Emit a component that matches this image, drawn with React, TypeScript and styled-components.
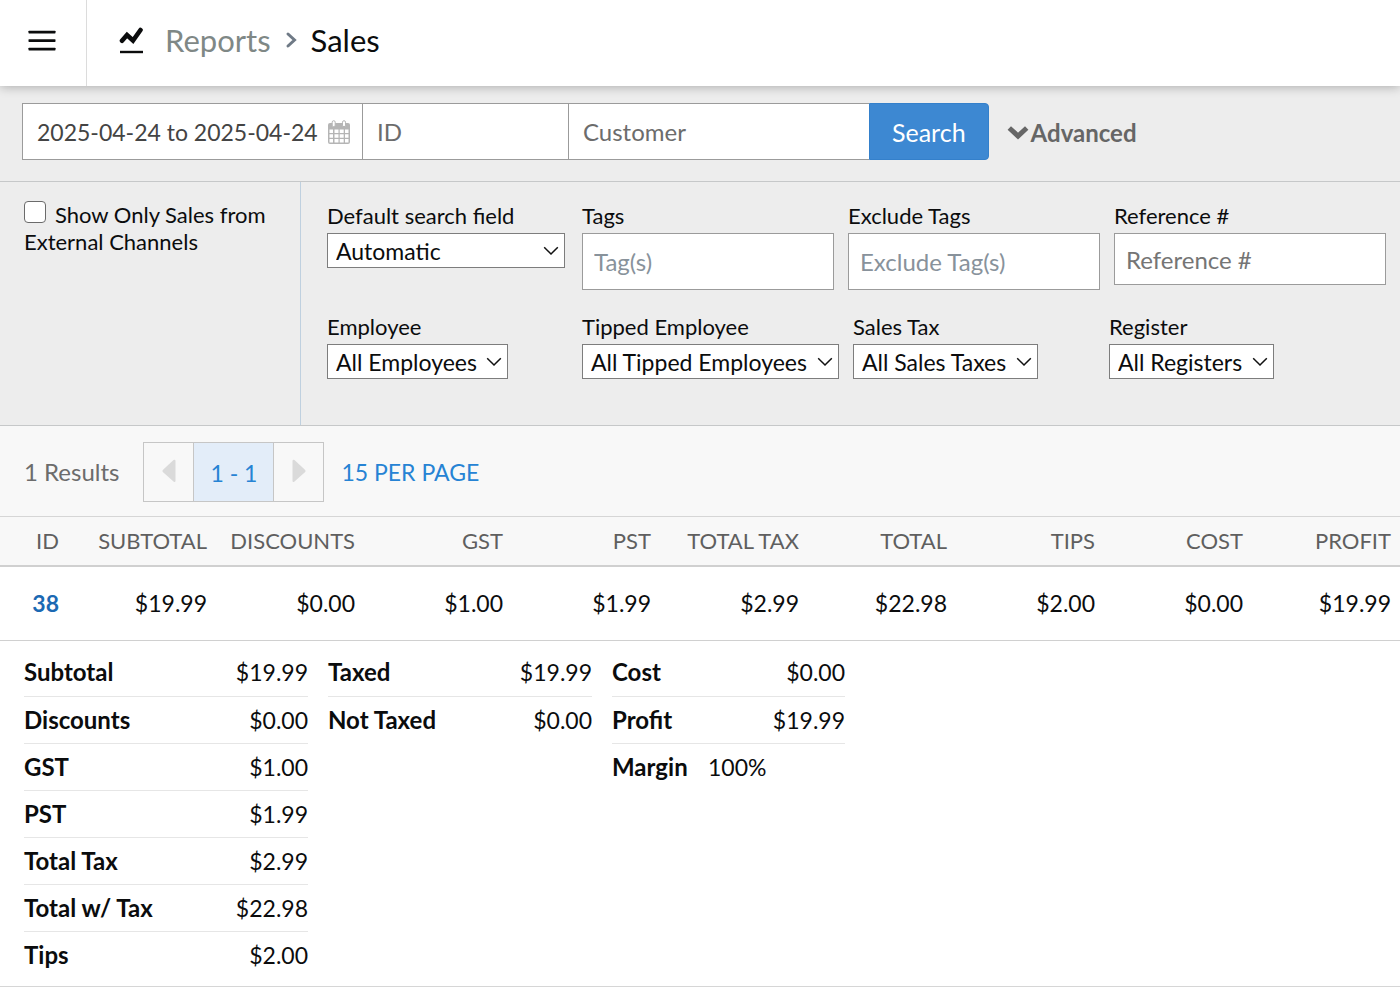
import React from "react";
import styled, { createGlobalStyle } from "styled-components";

const GlobalStyle = createGlobalStyle`
  *, *::before, *::after { box-sizing: border-box; }
  body {
    margin: 0;
    background: #fff;
    color: #0b0c0d;
    font-family: Lato, "Liberation Sans", sans-serif;
    font-size: 24px;
    line-height: 30px;
  }
  input, select, button { font: inherit; color: inherit; border-radius: 0; }
`;

const Header = styled.header`
  position: relative;
  display: flex;
  height: 86px;
  background: #fff;
  box-shadow: 0 1px 10px rgba(0, 0, 0, 0.28);
`;

const MenuButton = styled.button`
  display: flex;
  align-items: center;
  justify-content: center;
  width: 87px;
  padding: 0 3px 4px 0;
  border: 0;
  border-right: 1px solid #dcdcdc;
  background: none;
  cursor: pointer;
`;

const Breadcrumb = styled.nav`
  display: flex;
  align-items: center;
  padding: 0 32px 6px;
  font-size: 31px;
  line-height: 40px;
`;

const CrumbLink = styled.a`
  margin-left: 20px;
  color: #7f8886;
  text-decoration: none;
`;

const CrumbArrow = styled.svg`
  margin: 0 13px 0 14px;
`;

const SearchBar = styled.form`
  display: flex;
  align-items: center;
  padding: 17px 22px 21px;
  border-bottom: 1px solid #c6c8c9;
  background: #ededed;
`;

const SearchCell = styled.div<{ $width: number }>`
  display: flex;
  align-items: center;
  width: ${(p) => p.$width}px;
  height: 57px;
  border: 1px solid #9b9b9b;
  border-right-width: 0;
  background: #fff;
`;

const SearchInput = styled.input`
  flex: 1;
  min-width: 0;
  height: 100%;
  padding: 0 0 0 14px;
  border: 0;
  background: none;
  color: #444;
  &::placeholder { color: #6c6c6c; opacity: 1; }
`;

const DateInput = styled(SearchInput)`
  font-size: 23px;
`;

const CalendarIcon = styled.svg`
  flex: none;
  margin-right: 12px;
`;

const SearchButton = styled.button`
  height: 57px;
  padding: 0 22px;
  border: 1px solid #3480cb;
  border-radius: 0 4px 4px 0;
  background: #3d88d2;
  color: #fff;
  font-size: 25px;
  cursor: pointer;
`;

const AdvancedButton = styled.button`
  display: flex;
  align-items: center;
  gap: 2px;
  margin-left: 18px;
  padding: 2px 0 0;
  border: 0;
  background: none;
  color: #666;
  font-weight: 700;
  cursor: pointer;
`;

const Filters = styled.section`
  display: flex;
  min-height: 244px;
  border-bottom: 1px solid #c6c8c9;
  background: #ededed;
  font-size: 22px;
  line-height: 27px;
`;

const ChannelPane = styled.div`
  flex: none;
  width: 301px;
  padding: 19px 24px;
  border-right: 1px solid #bfd0df;
`;

const CheckBox = styled.input`
  appearance: none;
  width: 22px;
  height: 22px;
  margin: 0 9px 0 0;
  border: 1px solid #6b6b6b;
  border-radius: 4px;
  background: #fff;
`;

const FilterRows = styled.div`
  flex: 1;
  display: flex;
  flex-direction: column;
  padding: 20px 14px 0 26px;
`;

const FilterRow = styled.div`
  display: flex;
  min-height: 111px;
`;

const Field = styled.div<{ $width?: number }>`
  display: flex;
  flex-direction: column;
  align-items: flex-start;
  flex: ${(p) => (p.$width ? `0 0 ${p.$width}px` : "1")};
  min-width: 0;
`;

const FieldGap = styled.div<{ $narrow?: boolean }>`
  flex: none;
  width: ${(p) => (p.$narrow ? 14 : 17)}px;
`;

const FieldLabel = styled.label`
  margin-bottom: 4px;
`;

const TextField = styled.input<{ $tall?: boolean }>`
  width: 100%;
  height: ${(p) => (p.$tall ? 57 : 52)}px;
  padding: 0 11px;
  border: 1px solid #9b9b9b;
  background: #fff;
  font-size: 24px;
  &::placeholder {
    color: ${(p) => (p.$tall ? "#88929b" : "#757575")};
    opacity: 1;
  }
`;

const SelectBox = styled.div<{ $wide?: boolean }>`
  display: grid;
  align-items: center;
  width: ${(p) => (p.$wide ? "100%" : "auto")};
  & > * { grid-area: 1 / 1; }
  & > svg { justify-self: end; margin-right: 6px; pointer-events: none; }
`;

const Select = styled.select`
  appearance: none;
  width: 100%;
  height: 35px;
  padding: 0 30px 0 8px;
  border: 1px solid #7d7d7d;
  background: #fff;
  font-size: 23px;
  line-height: 30px;
`;

const ResultsBar = styled.div`
  display: flex;
  align-items: center;
  height: 90px;
  padding: 2px 24px 0;
  background: #f8f8f8;
  color: #6c6c6c;
`;

const Pager = styled.div`
  display: flex;
  height: 60px;
  margin: 0 17px 0 24px;
  border: 1px solid #c6c6c6;
`;

const PageArrow = styled.button`
  display: flex;
  align-items: center;
  justify-content: center;
  width: 49px;
  padding: 0 0 2px;
  border: 0;
  background: none;
`;

const PageRange = styled.button`
  width: 81px;
  padding: 2px 0 0;
  border: 0 solid #c6c6c6;
  border-width: 0 1px;
  background: #e3edf9;
  color: #2683d4;
  font-size: 23px;
`;

const PerPage = styled.a`
  color: #2683d4;
  font-size: 23px;
  text-decoration: none;
`;

const SalesTable = styled.table`
  width: 100%;
  table-layout: fixed;
  border-collapse: collapse;
  text-align: right;
`;

const HeadCell = styled.th`
  height: 49px;
  padding: 0 9px 0 0;
  border-top: 1px solid #d6d6d6;
  border-bottom: 2px solid #d0d0d0;
  background: #f8f8f8;
  color: #5f5f5f;
  font-size: 22px;
  font-weight: 400;
  &:first-child { width: 68px; }
`;

const Cell = styled.td`
  height: 75px;
  padding: 0 9px 0 0;
  border-bottom: 1px solid #d0d0d0;
  font-size: 23px;
`;

const SaleLink = styled.a`
  color: #1b69b3;
  font-weight: 700;
  text-decoration: none;
`;

const Summary = styled.section`
  display: flex;
  align-items: flex-start;
  gap: 20px;
  padding: 8px 24px;
  border-bottom: 1px solid #d6d6d6;
`;

const SummaryTable = styled.table<{ $width: number }>`
  width: ${(p) => p.$width}px;
  border-collapse: collapse;
`;

const SummaryRow = styled.tr`
  border-bottom: 1px solid #e6e6e6;
  &:last-child { border-bottom: 0; }
`;

const SummaryName = styled.th<{ $width?: number }>`
  width: ${(p) => (p.$width ? `${p.$width}px` : "auto")};
  height: 47px;
  padding: 0;
  font-weight: 700;
  text-align: left;
`;

const SummaryValue = styled.td<{ $left?: boolean }>`
  padding: 0;
  font-size: 23px;
  text-align: ${(p) => (p.$left ? "left" : "right")};
`;

const Chevron = () => (
  <svg width="16" height="10" viewBox="0 0 16 10" fill="none" stroke="#111" strokeWidth="1.5">
    <path d="M1.2 1.2 8 8l6.800-6.800" />
  </svg>
);

const selects = [
  { id: "employee", label: "Employee", option: "All Employees", width: 255 },
  { id: "tipped", label: "Tipped Employee", option: "All Tipped Employees", width: 271 },
  { id: "tax", label: "Sales Tax", option: "All Sales Taxes", width: 256 },
  { id: "register", label: "Register", option: "All Registers", width: 256 },
];

const columns = [
  ["ID", "38"],
  ["Subtotal", "$19.99"],
  ["Discounts", "$0.00"],
  ["GST", "$1.00"],
  ["PST", "$1.99"],
  ["Total Tax", "$2.99"],
  ["Total", "$22.98"],
  ["Tips", "$2.00"],
  ["Cost", "$0.00"],
  ["Profit", "$19.99"],
];

const summaries = [
  {
    width: 284,
    rows: [
      ["Subtotal", "$19.99"],
      ["Discounts", "$0.00"],
      ["GST", "$1.00"],
      ["PST", "$1.99"],
      ["Total Tax", "$2.99"],
      ["Total w/ Tax", "$22.98"],
      ["Tips", "$2.00"],
    ],
  },
  { width: 264, rows: [["Taxed", "$19.99"], ["Not Taxed", "$0.00"]] },
  {
    width: 233,
    nameWidth: 96,
    rows: [["Cost", "$0.00"], ["Profit", "$19.99"], ["Margin", "100%"]],
  },
];

export default function App() {
  return (
    <>
      <GlobalStyle />
      <Header>
        <MenuButton aria-label="Menu">
          <svg width="28" height="22" viewBox="0 0 28 22" fill="#0b0c0d">
            <rect x="0.5" y="0.700" width="27" height="2.700" rx="0.6" />
            <rect x="0.5" y="9.200" width="27" height="2.700" rx="0.6" />
            <rect x="0.5" y="17.700" width="27" height="2.700" rx="0.6" />
          </svg>
        </MenuButton>
        <Breadcrumb aria-label="Breadcrumb">
          <svg width="26" height="28" viewBox="0 0 26 28" fill="none" stroke="#0b0c0d">
            <path
              d="M3 14.800 8 9l6 5.500L21.500 4"
              strokeWidth="4.600"
              strokeLinecap="round"
            />
            <path d="M1 26h23" strokeWidth="2.400" />
          </svg>
          <CrumbLink href="#reports">Reports</CrumbLink>
          <CrumbArrow width="13" height="18" viewBox="0 0 13 18" fill="none" stroke="#6f7a86" strokeWidth="3">
            <path d="m3 3 6.500 6L3 15" strokeLinecap="round" />
          </CrumbArrow>
          <span aria-current="page">Sales</span>
        </Breadcrumb>
      </Header>

      <main>
        <SearchBar onSubmit={(e) => e.preventDefault()}>
          <SearchCell $width={340}>
            <DateInput aria-label="Date range" defaultValue="2025-04-24 to 2025-04-24" />
            <CalendarIcon width="22" height="24" viewBox="0 0 22 24">
              <rect x="0" y="3" width="22" height="21" rx="2" fill="#b5b5b5" />
              <path
                d="M1.500 9.500h3.500v3.500h-3.500zM6.500 9.500h4v3.500h-4zM11.700 9.500h4v3.500h-4zM17 9.500h3.500v3.500h-3.500zM1.500 14.200h3.500v3.500h-3.500zM6.500 14.200h4v3.500h-4zM11.700 14.200h4v3.500h-4zM17 14.200h3.500v3.500h-3.500zM1.500 19h3.500v3.500h-3.500zM6.500 19h4v3.500h-4zM11.700 19h4v3.500h-4zM17 19h3.500v3.500h-3.500z"
                fill="#fff"
              />
              <rect x="4.200" y="0.700" width="3" height="6" rx="1.500" fill="#fff" stroke="#b5b5b5" />
              <rect x="14.500" y="0.700" width="3" height="6" rx="1.500" fill="#fff" stroke="#b5b5b5" />
            </CalendarIcon>
          </SearchCell>
          <SearchCell $width={206}>
            <SearchInput aria-label="ID" placeholder="ID" />
          </SearchCell>
          <SearchCell $width={301}>
            <SearchInput aria-label="Customer" placeholder="Customer" />
          </SearchCell>
          <SearchButton type="submit">Search</SearchButton>
          <AdvancedButton type="button">
            <svg width="22" height="15" viewBox="0 0 22 15" fill="none" stroke="#666" strokeWidth="5">
              <path d="m2.300 3 8.700 8 8.700-8" />
            </svg>
            Advanced
          </AdvancedButton>
        </SearchBar>

        <Filters>
          <ChannelPane>
            <CheckBox type="checkbox" id="external" />
            <label htmlFor="external">Show Only Sales from External Channels</label>
          </ChannelPane>
          <FilterRows>
            <FilterRow>
              <Field $width={238}>
                <FieldLabel htmlFor="search-field">Default search field</FieldLabel>
                <SelectBox $wide>
                  <Select id="search-field">
                    <option>Automatic</option>
                  </Select>
                  <Chevron />
                </SelectBox>
              </Field>
              <FieldGap />
              <Field $width={252}>
                <FieldLabel htmlFor="tags">Tags</FieldLabel>
                <TextField id="tags" $tall placeholder="Tag(s)" />
              </Field>
              <FieldGap $narrow />
              <Field $width={252}>
                <FieldLabel htmlFor="exclude-tags">Exclude Tags</FieldLabel>
                <TextField id="exclude-tags" $tall placeholder="Exclude Tag(s)" />
              </Field>
              <FieldGap $narrow />
              <Field>
                <FieldLabel htmlFor="reference">Reference #</FieldLabel>
                <TextField id="reference" placeholder="Reference #" />
              </Field>
            </FilterRow>
            <FilterRow>
              {selects.map((s) => (
                <Field key={s.id} $width={s.width}>
                  <FieldLabel htmlFor={s.id}>{s.label}</FieldLabel>
                  <SelectBox>
                    <Select id={s.id}>
                      <option>{s.option}</option>
                    </Select>
                    <Chevron />
                  </SelectBox>
                </Field>
              ))}
            </FilterRow>
          </FilterRows>
        </Filters>

        <ResultsBar>
          <span>1 Results</span>
          <Pager>
            <PageArrow aria-label="Previous page">
              <svg width="14" height="24" viewBox="0 0 14 24" fill="#dadada">
                <path d="M0.800 11 11.500 1Q13.500 0 13.500 2v19.500Q13.500 24 11.500 22.500L0.800 13Q0 12 0.800 11z" />
              </svg>
            </PageArrow>
            <PageRange>1 - 1</PageRange>
            <PageArrow aria-label="Next page">
              <svg width="14" height="24" viewBox="0 0 14 24" fill="#dadada">
                <path d="M13.200 11 2.500 1Q0.500 0 0.500 2v19.500Q0.500 24 2.500 22.500L13.200 13Q14 12 13.200 11z" />
              </svg>
            </PageArrow>
          </Pager>
          <PerPage href="#per-page">15 PER PAGE</PerPage>
        </ResultsBar>

        <SalesTable>
          <thead>
            <tr>
              {columns.map(([name]) => (
                <HeadCell key={name} scope="col">{name.toUpperCase()}</HeadCell>
              ))}
            </tr>
          </thead>
          <tbody>
            <tr>
              {columns.map(([name, value]) => (
                <Cell key={name}>
                  {name === "ID" ? <SaleLink href="#sale-38">{value}</SaleLink> : value}
                </Cell>
              ))}
            </tr>
          </tbody>
        </SalesTable>

        <Summary>
          {summaries.map((table) => (
            <SummaryTable key={table.width} $width={table.width}>
              <tbody>
                {table.rows.map(([name, value]) => (
                  <SummaryRow key={name}>
                    <SummaryName scope="row" $width={table.nameWidth}>{name}</SummaryName>
                    <SummaryValue $left={name === "Margin"}>{value}</SummaryValue>
                  </SummaryRow>
                ))}
              </tbody>
            </SummaryTable>
          ))}
        </Summary>
      </main>
    </>
  );
}
